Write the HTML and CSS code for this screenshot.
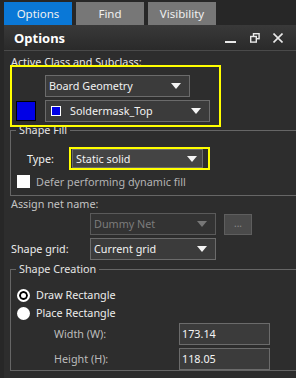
FILE: index.html
```html
<!DOCTYPE html>
<html lang="en">
<head>
  <meta charset="UTF-8" />
  <title>Options</title>
  <link rel="stylesheet" href="styles.css">
</head>
<body>
  <div class="tabs">
    <div class="tab active">Options</div>
    <div class="tab">Find</div>
    <div class="tab">Visibility</div>
  </div>

  <div class="panel">
    <div class="panel-head">
      <span class="title">Options</span>
      <div class="head-icons">
        <svg width="12" height="12" viewBox="0 0 12 12"><rect x="0" y="9" width="11" height="2" fill="#e8e8e8"/></svg>
        <svg width="10" height="10" viewBox="0 0 10 10" fill="none" stroke="#e8e8e8" stroke-width="1.4">
          <rect x="3.5" y="0.7" width="5.6" height="5"/>
          <rect x="0.7" y="3.5" width="5.6" height="5.6" fill="#333"/>
        </svg>
        <svg width="10" height="10" viewBox="0 0 10 10" stroke="#e8e8e8" stroke-width="1.6"><path d="M0.5 0.5 L9.5 9.5 M9.5 0.5 L0.5 9.5"/></svg>
      </div>
    </div>

    <div class="panel-body">
      <div class="caption">Active Class and Subclass:</div>
      <div class="mark class-box">
        <div class="row">
          <div class="select wide-1">Board Geometry<span class="arrow"></span></div>
        </div>
        <div class="row second">
          <div class="swatch"></div>
          <div class="select wide-2"><span class="mini-swatch"></span>Soldermask_Top<span class="arrow"></span></div>
        </div>
      </div>

      <fieldset class="group fill">
        <legend>Shape Fill</legend>
        <div class="type-row">
          <span class="type-label">Type:</span>
          <div class="mark type-box">
            <div class="select type-select">Static solid<span class="arrow"></span></div>
          </div>
        </div>
        <div class="check-row">
          <span class="checkbox"></span>
          <span class="muted">Defer performing dynamic fill</span>
        </div>
      </fieldset>

      <div class="caption net">Assign net name:</div>
      <div class="field-row net-row">
        <div class="select field disabled">Dummy Net<span class="arrow"></span></div>
        <div class="dots">...</div>
      </div>
      <div class="field-row grid-row">
        <span class="field-label">Shape grid:</span>
        <div class="select field">Current grid<span class="arrow"></span></div>
      </div>

      <fieldset class="group creation">
        <legend>Shape Creation</legend>
        <div class="radio-row first">
          <span class="radio on"></span>Draw Rectangle
        </div>
        <div class="radio-row">
          <span class="radio"></span>Place Rectangle
        </div>
        <div class="size-row first">
          <span class="size-label">Width (W):</span>
          <div class="input">173.14</div>
        </div>
        <div class="size-row">
          <span class="size-label">Height (H):</span>
          <div class="input">118.05</div>
        </div>
      </fieldset>
    </div>
  </div>
</body>
</html>
```

FILE: styles.css
```css
html, body {
  margin: 0;
  padding: 0;
  overflow: hidden;
}
body {
  width: 296px;
  height: 378px;
  background: #272727;
  font-family: "Noto Sans", "Open Sans", sans-serif;
  font-size: 10.8px;
  line-height: 16px;
  color: #ececec;
}
.tabs {
  display: flex;
  gap: 4px;
  padding: 2px 0 0 4px;
  height: 23px;
}
.tab {
  width: 68px;
  height: 23px;
  line-height: 23px;
  background: #777777;
  color: #f0f0f0;
  text-align: center;
  font-size: 11.5px;
}
.tab.active {
  background: #0a78d7;
}
.panel {
  margin-left: 4px;
  background: #2d2d2d;
  height: 353px;
}
.panel-head {
  height: 25px;
  display: flex;
  align-items: center;
  justify-content: space-between;
  background: linear-gradient(#393939, #2a2a2a);
  border-bottom: 1px solid #4a4a4a;
}
.title {
  font-weight: bold;
  font-size: 13px;
  color: #fff;
  padding-left: 10px;
}
.head-icons {
  display: flex;
  align-items: center;
  gap: 13px;
  padding-right: 13px;
}
.head-icons svg {
  display: block;
}
.panel-body {
  padding-left: 6px;
}
.caption {
  margin-top: 3px;
  padding-left: 1px;
  color: #e4e4e4;
}
.mark {
  border: 2px solid #ffff00;
  position: relative;
  box-sizing: border-box;
}
.class-box {
  width: 211px;
  margin-top: -5px;
  padding: 8px 0 3px 0;
}
.row {
  display: flex;
  align-items: center;
}
.row.second {
  margin-top: 3px;
}
.select {
  position: relative;
  box-sizing: border-box;
  height: 22px;
  line-height: 20px;
  border: 1px solid #6b6b6b;
  background: #3b3b3b;
  color: #f2f2f2;
  padding-left: 3px;
  display: flex;
  align-items: center;
}
.arrow {
  margin-left: auto;
  margin-right: 8px;
  width: 0;
  height: 0;
  border-left: 5px solid transparent;
  border-right: 5px solid transparent;
  border-top: 6px solid #f4f4f4;
}
.wide-1 {
  width: 145px;
  margin-left: 33px;
}
.swatch {
  width: 20px;
  height: 20px;
  box-sizing: border-box;
  margin-left: 4px;
  background: #0000e6;
  border: 1px solid #000;
}
.wide-2 {
  width: 165px;
  margin-left: 9px;
  padding-left: 5px;
}
.mini-swatch {
  width: 10px;
  height: 10px;
  box-sizing: border-box;
  background: #0000e6;
  border: 1px solid #fff;
  margin-right: 9px;
}
.group {
  margin: 0;
  padding: 0;
  border: 1px solid #666;
  border-right: none;
  min-width: 0;
}
.group legend {
  margin-left: 5px;
  padding: 0 3px;
  line-height: 16px;
  color: #e4e4e4;
}
.fill {
  margin-top: -5px;
  padding-bottom: 7px;
}
.type-row {
  display: flex;
  align-items: center;
  margin-top: 9px;
}
.type-label {
  width: 42px;
  margin-left: 16px;
  color: #f0f0f0;
}
.type-box {
  width: 141px;
  height: 23px;
}
.type-select {
  width: 131px;
  height: 19px;
  margin-left: 1px;
  background: #444;
  line-height: 17px;
}
.type-select .arrow {
  margin-right: 5px;
}
.check-row {
  display: flex;
  align-items: center;
  margin-top: 5px;
  height: 13px;
  line-height: 13px;
}
.checkbox {
  width: 13px;
  height: 13px;
  background: #fff;
  margin: 0 6px 0 6px;
}
.muted {
  color: #b4b4b4;
}
.caption.net {
  margin-top: 0;
  color: #c4c4c4;
}
.field-row {
  display: flex;
  align-items: center;
  margin-top: 1px;
}
.net-row {
  padding-left: 80px;
}
.grid-row {
  margin-top: 3px;
}
.field-label {
  width: 80px;
  padding-left: 1px;
  box-sizing: border-box;
}
.field {
  width: 126px;
}
.disabled {
  background: #333;
  border-color: #5a5a5a;
  color: #7c7c7c;
}
.disabled .arrow {
  border-top-color: #777;
}
.dots {
  width: 28px;
  height: 21px;
  box-sizing: border-box;
  margin-left: 8px;
  background: #4a4a4a;
  border: 1px solid #5e5e5e;
  color: #8a8a8a;
  text-align: center;
  line-height: 16px;
  font-size: 10px;
}
.creation {
  margin-top: 1px;
}
.radio-row {
  display: flex;
  align-items: center;
  height: 18px;
  color: #ececec;
}
.radio-row.first {
  margin-top: 9px;
}
.radio {
  width: 13px;
  height: 13px;
  box-sizing: border-box;
  border-radius: 50%;
  background: #fff;
  margin: 0 6px 0 6px;
}
.radio.on {
  border: 2px solid #fff;
  box-shadow: inset 0 0 0 2px #000;
  background: #fff;
}
.size-row {
  display: flex;
  align-items: center;
  margin-top: 3px;
}
.size-row.first {
  margin-top: 1px;
}
.size-label {
  width: 125px;
  padding-left: 43px;
  color: #bcbcbc;
}
.input {
  width: 91px;
  height: 22px;
  box-sizing: border-box;
  border: 1px solid #6b6b6b;
  background: #3b3b3b;
  color: #f4f4f4;
  line-height: 20px;
  padding-left: 2px;
}
```
